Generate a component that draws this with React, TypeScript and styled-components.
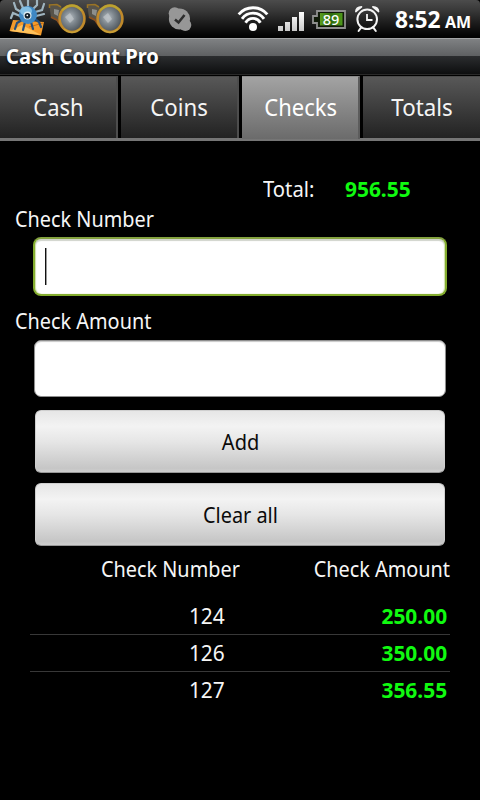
import React from 'react';
import styled, { createGlobalStyle, css } from 'styled-components';

const GlobalStyle = createGlobalStyle`
  * { box-sizing: border-box; }
  body { margin: 0; background: #000; }
`;

const Screen = styled.div`
  width: 480px;
  height: 800px;
  background: #000;
  color: #f6f6f6;
  font-family: 'Noto Sans', 'Open Sans', sans-serif;
  font-size: 22px;
  overflow: hidden;
  display: flex;
  flex-direction: column;
`;

/* Condensed lettering: the UI face is a little narrower than Noto Sans. */
const Type = styled.span<{ $scale?: number; $origin?: 'left' | 'center' | 'right' }>`
  display: inline-block;
  white-space: nowrap;
  transform: scaleX(${p => p.$scale ?? 0.903});
  transform-origin: ${p => p.$origin ?? 'left'} center;
`;

const StatusBar = styled.header`
  height: 38px;
  flex: none;
  display: flex;
  align-items: flex-start;
  background: linear-gradient(#4c4c4c 0, #373737 11px, #1c1c1c 23px, #040404 35px, #000 38px);
  border-radius: 4px 4px 0 0;
`;

const Notifications = styled.div`
  width: 236px;
  display: flex;
  padding-left: 8px;
`;

const Indicators = styled.div`
  display: flex;
  flex: 1;
  svg { flex: none; }
`;

const Clock = styled.div`
  display: flex;
  align-items: baseline;
  font-weight: 700;
  color: #fff;
  line-height: 38px;
  margin-left: 13px;
`;

const Hour = styled.span`
  font-size: 23px;
  width: 50px;
`;

const Meridiem = styled.span`
  font-size: 16px;
`;

const TitleBar = styled.h1`
  margin: 0;
  height: 38px;
  flex: none;
  padding-left: 6px;
  border-top: 1px solid #a2a4a5;
  font-size: 21px;
  line-height: 35px;
  font-weight: 700;
  color: #fff;
  text-shadow: 0 1px 3px rgba(0, 0, 0, 0.85);
  background: linear-gradient(
    #7f8183 0, #5e6062 17px, #2b2d2f 17px, #0d0e0f 35px, #292929 35px, #292929 36px, #000 36px
  );
`;

const TabBar = styled.nav`
  display: grid;
  grid-template-columns: 118px 118px 118px 117px;
  column-gap: 3px;
  height: 65px;
  flex: none;
  background: #000;
  border-bottom: 3px solid #757575;
`;

const Tab = styled.button<{ $active?: boolean }>`
  border: 0;
  border-top: 1px solid #4a4a4a;
  border-right: 2px solid #4d4d4d;
  padding: 0;
  height: 62px;
  font: 400 24px/59px 'Noto Sans', sans-serif;
  color: #f4f4f4;
  background: linear-gradient(#585858, #222);
  display: flex;
  justify-content: center;
  align-items: flex-start;
  &:last-child { border-right: 0; }
  ${p => p.$active && css`
    background: linear-gradient(#a3a3a3, #6b6b6b);
    border-top-color: #8c8c8c;
    border-right-color: #5c5c5c;
    color: #fff;
    height: 63px;
    padding-left: 1px;
  `}
`;

const Form = styled.main`
  padding-top: 32px;
  display: flex;
  flex-direction: column;
`;

const TotalRow = styled.div`
  display: grid;
  grid-template-columns: 82px auto;
  padding-left: 263px;
  height: 31px;
  line-height: 31px;
`;

const Money = styled.span`
  color: #10fa10;
  font-weight: 700;
`;

const Label = styled.label<{ $gap?: number }>`
  height: 29px;
  line-height: 29px;
  padding-left: 15px;
  margin-top: ${p => p.$gap ?? 0}px;
`;

const Field = styled.div<{ $focused?: boolean }>`
  display: flex;
  align-items: center;
  background: #fff;
  ${p => p.$focused ? css`
    margin: 4px 33px 0;
    height: 59px;
    padding: 0 10px;
    border: 2px solid #84ad2f;
    border-top-color: #84a23f;
    border-radius: 8px;
    box-shadow: inset 0 2px 1px #d0d3cb, inset 1px 0 1px #cfe0a8, inset -1px 0 1px #cfe0a8;
  ` : css`
    margin: 5px 34px 0;
    height: 57px;
    border: 1px solid #8e8e8e;
    border-radius: 7px;
    box-shadow: inset 0 1px 1px #c8c8c8;
  `}
`;

const Caret = styled.i`
  width: 1px;
  height: 37px;
  background: #111;
  box-shadow: 1px 0 0 #999;
`;

const Button = styled.button<{ $gap: number }>`
  margin: ${p => p.$gap}px 35px 0;
  height: 63px;
  padding: 0 0 0 1px;
  border: 1px solid #cfcfcf;
  border-bottom: 1px solid #989898;
  border-radius: 6px;
  font: 400 22px/61px 'Noto Sans', sans-serif;
  color: #0a0a0a;
  background: linear-gradient(#e6e6e6 0, #f3f3f3 25%, #e6e6e6 50%, #c6c6c6 94%, #cfcfcf 100%);
`;

const ListHeader = styled.div`
  display: grid;
  grid-template-columns: 240px 210px;
  justify-items: end;
  height: 29px;
  line-height: 29px;
  margin-top: 8px;
`;

const CheckList = styled.ul`
  list-style: none;
  margin: 15px 30px 0;
  padding: 0;
`;

const CheckRow = styled.li`
  display: grid;
  grid-template-columns: 195px 222px;
  justify-items: end;
  height: 37px;
  line-height: 35px;
  border-bottom: 1px solid #383838;
  &:last-child { border-bottom: 0; }
`;

const SkypeMark = styled.svg`
  margin-left: 42px;
`;

const checks = [
  { number: '124', amount: '250.00' },
  { number: '126', amount: '350.00' },
  { number: '127', amount: '356.55' },
];

const tabs = [
  { name: 'Cash', scale: 0.915 },
  { name: 'Coins', scale: 0.925 },
  { name: 'Checks', scale: 0.916 },
  { name: 'Totals', scale: 0.93 },
];

const CritterIcon = () => (
  <svg width="40" height="38" viewBox="0 0 40 38">
    <path d="M5 20 L36 22 L33 35.500 L1.500 31Z" fill="#f39a2b" />
    <path d="M2 31 L14 25 L33 35Z" fill="#ffc25c" />
    <path d="M21 27 L35 23" fill="none" stroke="#c96d12" strokeWidth="1" />
    <g fill="none" stroke="#9fb4bf" strokeWidth="2.2" strokeLinecap="round">
      <path d="M13 12 L8 9 L6 3M15 8 L12 1M20 7 L20 0M25 9 L29 5 L29 0M27 12 L34 10 L36 4M28 16 L36 14M12 16 L5 13 L3 18" />
    </g>
    <g fill="none" stroke="#244f7d" strokeWidth="2.2" strokeLinecap="round">
      <path d="M14 20 L9 23 L7 29M17 22 L15 30M23 22 L25 29M27 19 L31 22 L33 27" />
    </g>
    <circle cx="20" cy="15" r="9" fill="#3f88c4" />
    <ellipse cx="18" cy="11" rx="6" ry="4.500" fill="#83bfe4" />
    <circle cx="19.500" cy="15.500" r="4" fill="#dcebf2" />
    <circle cx="19.500" cy="15.800" r="2.800" fill="#12202b" />
    <circle cx="19.300" cy="15.300" r="0.900" fill="#fff" />
  </svg>
);

const SpeakerIcon = ({ id }: { id: string }) => (
  <svg width="38" height="38" viewBox="0 0 38 38">
    <defs>
      <radialGradient id={id} cx="42%" cy="45%" r="58%">
        <stop offset="0" stopColor="#b4bbc0" />
        <stop offset="0.45" stopColor="#7d868d" />
        <stop offset="1" stopColor="#4a5157" />
      </radialGradient>
    </defs>
    <path d="M1.500 6 L9 5 L15 8 L14 27 L9 21 L3 18Z" fill="#57534a" />
    <path d="M1.500 8 L1.500 5 L9 4.500 L13 7" fill="none" stroke="#9a7426" strokeWidth="1.500" />
    <path d="M3 17 L9 20 L13 26" fill="none" stroke="#8c4f1c" strokeWidth="1.800" />
    <path d="M6 9 L11 10 L10 16 L6 14Z" fill="#8d8f8c" />
    <ellipse cx="24" cy="18.800" rx="12.400" ry="13.200" fill={`url(#${id})`} stroke="#c08a2b" strokeWidth="2.600" />
    <path d="M14 10.500 Q24 0.500 34 10.500" fill="none" stroke="#b9a531" strokeWidth="2" />
    <path d="M16 29 Q24 36 32 29" fill="none" stroke="#c9a238" strokeWidth="1.600" />
    <path d="M17 17 L22 13 L26 19 L22 23Z" fill="#c0c6ca" opacity="0.700" />
  </svg>
);

const SkypeIcon = () => (
  <SkypeMark width="26" height="38" viewBox="0 0 26 38">
    <g fill="#979797">
      <circle cx="13.5" cy="19" r="10.6" />
      <circle cx="8.7" cy="13.2" r="6" />
      <circle cx="19.3" cy="25" r="6" />
    </g>
    <path d="M9 19.5 L12.500 22.500 L18.500 15" fill="none" stroke="#2d2d2d" strokeWidth="2.6" />
  </SkypeMark>
);

const WifiIcon = () => (
  <svg width="34" height="38" viewBox="0 0 34 38">
    <circle cx="17" cy="27" r="4" fill="#fff" />
    <g fill="none" stroke="#fff" strokeWidth="2.9">
      <path d="M9.6 22.8 A8.4 8.4 0 0 1 24.4 22.8" />
      <path d="M6 18.8 A13.5 13.5 0 0 1 28 18.8" />
      <path d="M2.7 14.4 A18.6 18.6 0 0 1 31.3 14.4" />
    </g>
  </svg>
);

const SignalIcon = () => (
  <svg width="42" height="38" viewBox="0 0 42 38">
    <defs>
      <linearGradient id="bars" x1="0" y1="12" x2="0" y2="31" gradientUnits="userSpaceOnUse">
        <stop offset="0" stopColor="#fff" />
        <stop offset="1" stopColor="#c8c8c8" />
      </linearGradient>
    </defs>
    <path d="M8 26h5v5H8zM15 22h5v9h-5zM22 17h5v14h-5zM29 12h5v19h-5z" fill="url(#bars)" />
  </svg>
);

const BatteryIcon = () => (
  <svg width="42" height="38" viewBox="0 0 42 38">
    <defs>
      <linearGradient id="charge" x1="0" y1="0" x2="1" y2="0">
        <stop offset="0" stopColor="#5a9c1e" />
        <stop offset="0.5" stopColor="#2d6a0d" />
        <stop offset="1" stopColor="#4f9a1b" />
      </linearGradient>
    </defs>
    <path d="M5 11h28v17H5v-5H1v-7h4z" fill="#101a08" stroke="#8f8f8f" strokeWidth="1.8" />
    <rect x="8" y="13" width="22.5" height="12.5" fill="url(#charge)" />
    <text x="19" y="24.500" textAnchor="middle" fontSize="14.5" fontWeight="500" fontFamily="'Noto Sans', sans-serif" fill="#fff">89</text>
  </svg>
);

const AlarmIcon = () => (
  <svg width="28" height="38" viewBox="0 0 28 38">
    <g fill="none" stroke="#f4f4f4" strokeLinecap="round">
      <circle cx="13.2" cy="19.3" r="9.8" strokeWidth="2" />
      <path d="M13 14v6h5.5" strokeWidth="1.8" strokeLinecap="butt" />
      <path d="M7.2 27.4 L4.6 31M19.2 27.4 L21.8 31" strokeWidth="2" />
    </g>
    <path d="M1.8 11.6 Q2 7 7.6 6.8 Z M24.600 11.6 Q24.400 7 18.800 6.800 Z" fill="#f4f4f4" stroke="#f4f4f4" strokeWidth="1.500" strokeLinejoin="round" />
  </svg>
);

export default function App() {
  return (
    <Screen>
      <GlobalStyle />
      <StatusBar>
        <Notifications>
          <CritterIcon />
          <SpeakerIcon id="speaker-a" />
          <SpeakerIcon id="speaker-b" />
          <SkypeIcon />
        </Notifications>
        <Indicators>
          <WifiIcon />
          <SignalIcon />
          <BatteryIcon />
          <AlarmIcon />
          <Clock>
            <Hour><Type $scale={0.99}>8:52</Type></Hour>
            <Meridiem>AM</Meridiem>
          </Clock>
        </Indicators>
      </StatusBar>
      <TitleBar><Type $scale={0.96}>Cash Count Pro</Type></TitleBar>
      <TabBar>
        {tabs.map(t => (
          <Tab key={t.name} $active={t.name === 'Checks'}>
            <Type $scale={t.scale} $origin="center">{t.name}</Type>
          </Tab>
        ))}
      </TabBar>
      <Form>
        <TotalRow>
          <Type $scale={0.92}>Total:</Type>
          <Money><Type $scale={0.95}>956.55</Type></Money>
        </TotalRow>
        <Label><Type>Check Number</Type></Label>
        <Field $focused><Caret /></Field>
        <Label $gap={10}><Type>Check Amount</Type></Label>
        <Field />
        <Button $gap={13}><Type $scale={0.91} $origin="center">Add</Type></Button>
        <Button $gap={10}><Type $scale={0.905} $origin="center">Clear all</Type></Button>
        <ListHeader>
          <Type $origin="right">Check Number</Type>
          <Type $origin="right">Check Amount</Type>
        </ListHeader>
        <CheckList>
          {checks.map(c => (
            <CheckRow key={c.number}>
              <Type $scale={0.95} $origin="right">{c.number}</Type>
              <Money><Type $scale={0.95} $origin="right">{c.amount}</Type></Money>
            </CheckRow>
          ))}
        </CheckList>
      </Form>
    </Screen>
  );
}
